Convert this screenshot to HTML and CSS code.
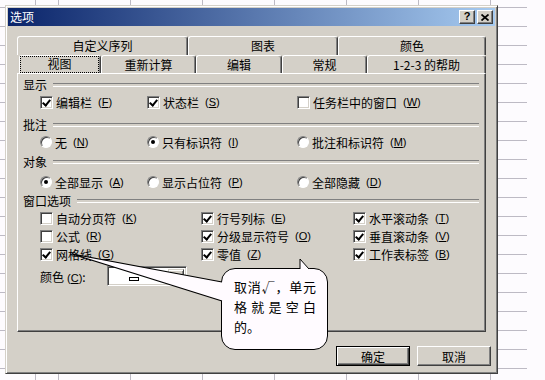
FILE: index.html
```html
<!DOCTYPE html>
<html lang="zh-CN">
<head>
    <meta charset="UTF-8" />
    <title>选项</title>
    <link rel="stylesheet" href="styles.css">
</head>
<body>
    <div class="sheet">
        <div class="dialog">
            <div class="titlebar">
                <span class="title">选项</span>
                <div class="title-btns">
                    <span class="tbtn help">?</span>
                    <span class="tbtn">
                        <svg width="8" height="7" viewBox="0 0 8 7"><path d="M0.5 0.5 L7.5 6.5 M7.5 0.5 L0.5 6.5" stroke="#000" stroke-width="1.7" fill="none"/></svg>
                    </span>
                </div>
            </div>

            <div class="tab-row back">
                <div class="tab w171">自定义序列</div>
                <div class="tab w150">图表</div>
                <div class="tab w148">颜色</div>
            </div>
            <div class="tab-row front">
                <div class="tab w82 selected"><span class="focus">视图</span></div>
                <div class="tab w95">重新计算</div>
                <div class="tab w86">编辑</div>
                <div class="tab w85">常规</div>
                <div class="tab w119">1-2-3 的帮助</div>
            </div>

            <div class="panel">
                <div class="heading">显示</div>
                <div class="opts">
                    <label class="opt"><span class="box checked"></span>编辑栏<span class="key">(<u>F</u>)</span></label>
                    <label class="opt"><span class="box checked"></span>状态栏<span class="key">(<u>S</u>)</span></label>
                    <label class="opt"><span class="box"></span>任务栏中的窗口<span class="key">(<u>W</u>)</span></label>
                </div>

                <div class="heading sp6">批注</div>
                <div class="opts">
                    <label class="opt"><span class="radio"></span>无<span class="key">(<u>N</u>)</span></label>
                    <label class="opt"><span class="radio on"></span>只有标识符<span class="key">(<u>I</u>)</span></label>
                    <label class="opt"><span class="radio"></span>批注和标识符<span class="key">(<u>M</u>)</span></label>
                </div>

                <div class="heading sp3">对象</div>
                <div class="opts sp3">
                    <label class="opt"><span class="radio on"></span>全部显示<span class="key">(<u>A</u>)</span></label>
                    <label class="opt"><span class="radio"></span>显示占位符<span class="key">(<u>P</u>)</span></label>
                    <label class="opt"><span class="radio"></span>全部隐藏<span class="key">(<u>D</u>)</span></label>
                </div>

                <div class="heading sp2">窗口选项</div>
                <div class="opts window">
                    <label class="opt"><span class="box"></span>自动分页符<span class="key">(<u>K</u>)</span></label>
                    <label class="opt"><span class="box checked"></span>行号列标<span class="key">(<u>E</u>)</span></label>
                    <label class="opt"><span class="box checked"></span>水平滚动条<span class="key">(<u>T</u>)</span></label>

                    <label class="opt"><span class="box"></span>公式<span class="key">(<u>R</u>)</span></label>
                    <label class="opt"><span class="box checked"></span>分级显示符号<span class="key">(<u>O</u>)</span></label>
                    <label class="opt"><span class="box checked"></span>垂直滚动条<span class="key">(<u>V</u>)</span></label>

                    <label class="opt"><span class="box checked"></span>网格线<span class="key">(<u>G</u>)</span></label>
                    <label class="opt"><span class="box checked"></span>零值<span class="key">(<u>Z</u>)</span></label>
                    <label class="opt"><span class="box checked"></span>工作表标签<span class="key">(<u>B</u>)</span></label>
                </div>

                <div class="color-row">
                    <span>颜色<span class="key">(<u>C</u>)</span>:</span>
                    <div class="combo">
                        <span class="swatch"></span>
                        <span class="drop"></span>
                    </div>
                </div>
            </div>

            <div class="actions">
                <button class="btn default">确定</button>
                <button class="btn">取消</button>
            </div>
        </div>

        <div class="callout">
            <span class="line">取消√，单元</span>
            <span class="line">格就是空白</span>
            <span class="last">的。</span>
        </div>

        <!-- 标注的尖角，指向“网格线” -->
        <svg class="pointer" width="175" height="60" viewBox="0 0 175 60">
            <polygon points="12,4 162,32 167,32 167,51 162,51" fill="#fffbff"/>
            <path d="M12 4 L162 32 M12 4 L162 51" stroke="#000" stroke-width="1.2" fill="none"/>
        </svg>
        <svg class="bump" width="14" height="12" viewBox="0 0 14 12">
            <polygon points="2,1 2,11.5 12,11.5" fill="#fffbff"/>
            <path d="M2 1 L2 11 M2 1 L11 11" stroke="#000" stroke-width="1" fill="none"/>
        </svg>
    </div>
</body>
</html>
```

FILE: styles.css
```css
* {
    box-sizing: border-box;
    margin: 0;
    padding: 0;
}

body {
    width: 545px;
    height: 380px;
    overflow: hidden;
    background: #fdfbfe;
    font-family: "Noto Sans CJK SC", "Liberation Sans", sans-serif;
    font-size: 12px;
    color: #000;
}

/* 背后的工作表网格 */
.sheet {
    position: relative;
    width: 527px;
    height: 380px;
    background-image:
        repeating-linear-gradient(to bottom, #bdbac4 0 1px, transparent 1px 19px),
        repeating-linear-gradient(to right, #bdbac4 0 1px, transparent 1px 72px);
    background-position: 0 7px, 58px 0;
}

.dialog {
    position: absolute;
    left: 5px;
    top: 5px;
    width: 493px;
    height: 369px;
    background: #d4d0c8;
    border: 1px solid;
    border-color: #d4d0c8 #404040 #404040 #d4d0c8;
    box-shadow: inset 1px 1px #fff, inset -1px -1px #808080;
    padding: 2px;
}

.titlebar {
    height: 18px;
    display: flex;
    align-items: center;
    justify-content: space-between;
    padding: 0 2px;
    background: linear-gradient(to right, #0a246a, #a6caf0);
}

.title {
    color: #fff;
    font-size: 12px;
    line-height: 16px;
}

.title-btns {
    display: flex;
    gap: 2px;
}

.tbtn {
    width: 16px;
    height: 14px;
    display: flex;
    align-items: center;
    justify-content: center;
    background: #d4d0c8;
    border: 1px solid;
    border-color: #fff #404040 #404040 #fff;
    box-shadow: inset -1px -1px #808080;
}

.help {
    font-family: "Liberation Sans", sans-serif;
    font-weight: bold;
    font-size: 11px;
    line-height: 11px;
    padding-bottom: 1px;
}

/* 选项卡 */
.tab-row {
    display: flex;
    height: 19px;
    margin: 0 9px;
}

.tab-row.back {
    margin-top: 10px;
}

.tab-row.front {
    height: 18px;
    margin-left: 11px;
}

.tab {
    height: 100%;
    border: 1px solid;
    border-bottom: none;
    border-color: #fff #404040 transparent #fff;
    border-radius: 3px 3px 0 0;
    box-shadow: inset -1px 0 #808080;
    text-align: center;
    line-height: 17px;
}

.w171 { width: 171px; }
.w150 { width: 150px; }
.w148 { width: 148px; }
.w82 { width: 82px; }
.w95 { width: 95px; }
.w86 { width: 86px; }
.w85 { width: 85px; }
.w119 { width: 119px; }

.tab.selected {
    padding: 1px 2px 0 1px;
}

.focus {
    display: block;
    outline: 1px dotted #000;
    line-height: 14px;
    height: 15px;
}

/* 面板 */
.panel {
    height: 259px;
    margin: 0 9px;
    border: 1px solid;
    border-color: #fff #404040 #404040 #fff;
    box-shadow: inset -1px -1px #808080;
    padding: 3px 6px 0 5px;
}

.heading {
    display: flex;
    align-items: center;
    gap: 6px;
    height: 16px;
    line-height: 16px;
}

.heading::after {
    content: "";
    flex: 1;
    height: 2px;
    border-top: 1px solid #808080;
    border-bottom: 1px solid #fff;
}

.sp2 { margin-top: 2px; }
.sp3 { margin-top: 3px; }
.sp6 { margin-top: 6px; }

.opts {
    display: grid;
    grid-template-columns: 107px 150px 1fr;
    grid-auto-rows: 18px;
    padding-left: 17px;
}

.opts.window {
    grid-template-columns: 161px 152px 1fr;
}

.opt {
    display: flex;
    align-items: center;
    gap: 3px;
    white-space: nowrap;
}

.key {
    font-family: "Liberation Sans", sans-serif;
    font-size: 11px;
    margin-left: 3px;
}

.box {
    width: 13px;
    height: 13px;
    flex: none;
    background: #fff;
    border: 1px solid;
    border-color: #808080 #fff #fff #808080;
    box-shadow: inset 1px 1px #404040, inset -1px -1px #d4d0c8;
    position: relative;
}

.box.checked::after {
    content: "";
    position: absolute;
    left: 3px;
    top: 1px;
    width: 3px;
    height: 6px;
    border: solid #000;
    border-width: 0 2px 2px 0;
    transform: rotate(40deg);
}

.radio {
    width: 12px;
    height: 12px;
    flex: none;
    border-radius: 50%;
    background: #fff;
    border: 1px solid;
    border-color: #808080 #fff #fff #808080;
    box-shadow: inset 1px 1px #404040;
    display: flex;
    align-items: center;
    justify-content: center;
}

.radio.on::after {
    content: "";
    width: 4px;
    height: 4px;
    border-radius: 50%;
    background: #000;
}

.color-row {
    display: grid;
    grid-template-columns: 67px 80px;
    align-items: center;
    height: 20px;
    margin-top: 3px;
    padding-left: 17px;
}

.combo {
    height: 20px;
    display: flex;
    align-items: center;
    justify-content: space-between;
    background: #fff;
    border: 1px solid;
    border-color: #808080 #fff #fff #808080;
    box-shadow: inset 1px 1px #404040, inset -1px -1px #d4d0c8;
    padding: 2px;
}

.swatch {
    width: 10px;
    height: 4px;
    margin: 6px 0 0 19px;
    border: 1px solid #000;
    background: #fff;
}

.drop {
    width: 16px;
    height: 100%;
    background: #d4d0c8;
    border: 1px solid;
    border-color: #d4d0c8 #404040 #404040 #d4d0c8;
    box-shadow: inset 1px 1px #fff, inset -1px -1px #808080;
}

/* 确定 / 取消 */
.actions {
    display: flex;
    justify-content: flex-end;
    gap: 7px;
    margin-top: 14px;
    padding-right: 4px;
}

.btn {
    width: 74px;
    height: 20px;
    font-family: inherit;
    font-size: 12px;
    background: #d4d0c8;
    border: 1px solid;
    border-color: #fff #404040 #404040 #fff;
    box-shadow: inset -1px -1px #808080;
}

.btn.default {
    border-color: #000;
    box-shadow: inset 1px 1px #fff, inset -1px -1px #404040, inset -2px -2px #808080;
}

/* 标注 */
.callout {
    position: absolute;
    left: 221px;
    top: 268px;
    width: 107px;
    height: 82px;
    background: #fffbff;
    border: 1px solid #000;
    border-radius: 14px;
    padding: 8px 11px 0 12px;
    font-size: 13px;
    line-height: 20px;
}

.line {
    display: block;
    text-align: justify;
    text-align-last: justify;
}

.last {
    display: block;
}

.pointer {
    position: absolute;
    left: 60px;
    top: 250px;
}

.bump {
    position: absolute;
    left: 298px;
    top: 258px;
}
```
